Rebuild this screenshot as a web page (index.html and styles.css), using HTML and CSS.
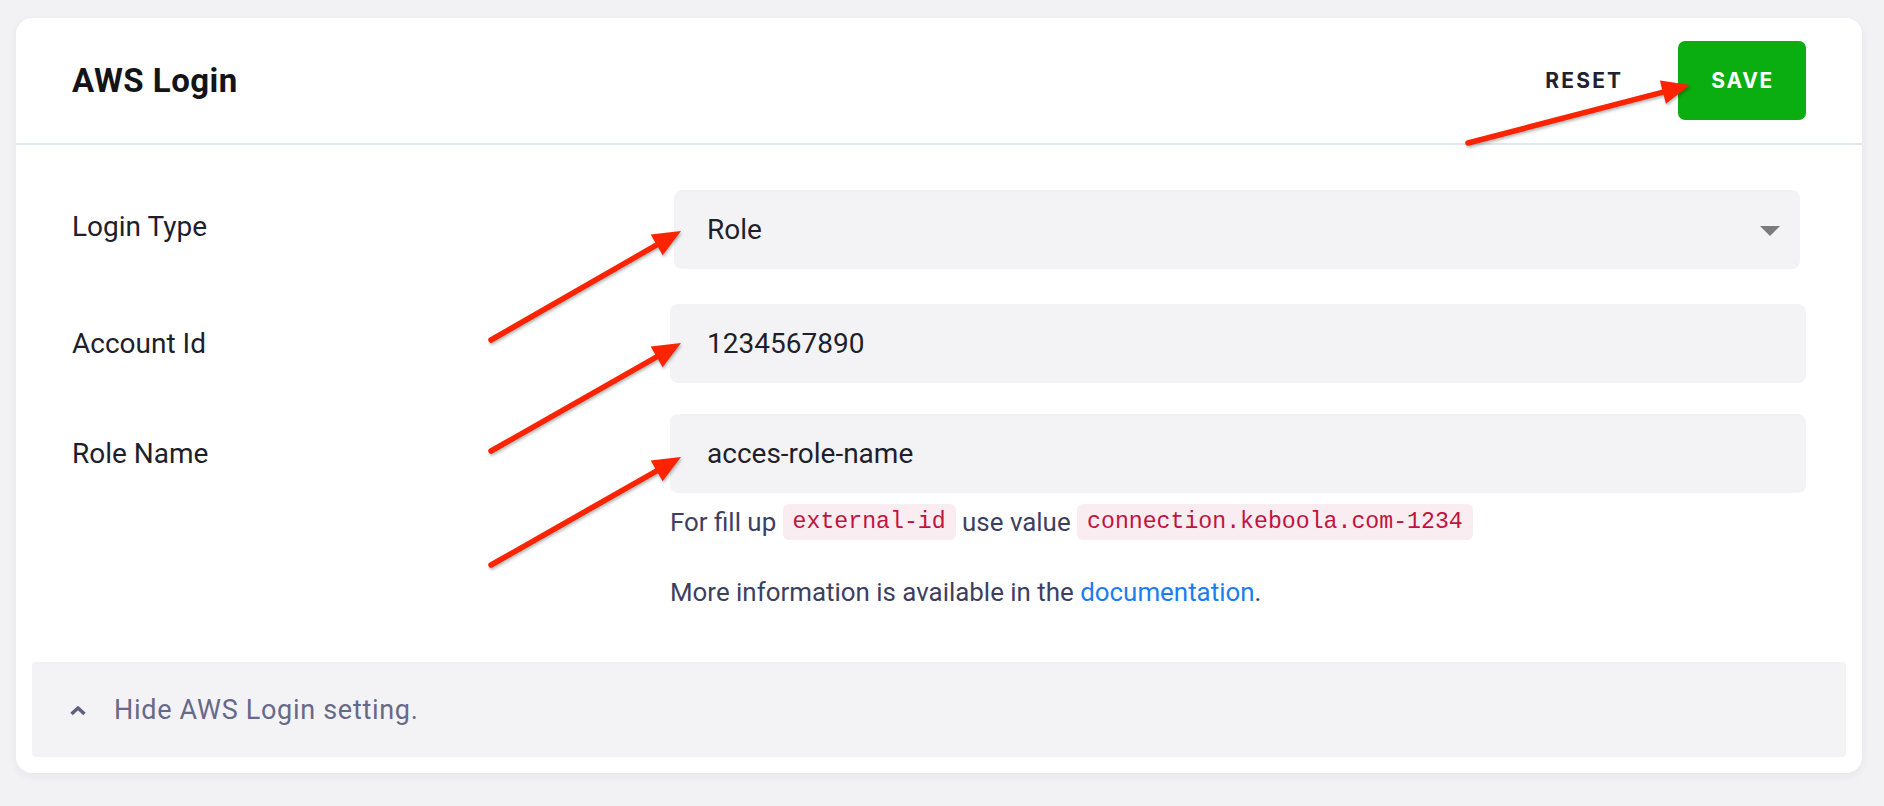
FILE: index.html
```html
<!DOCTYPE html>
<html lang="en">
<head>
<meta charset="utf-8">
<title>AWS Login</title>
<link rel="stylesheet" href="styles.css">
</head>
<body>
<div class="page">
  <section class="card">
    <header class="card-header">
      <h2 class="card-title">AWS Login</h2>
      <div class="actions">
        <button class="btn btn-reset" type="button">RESET</button>
        <button class="btn btn-save" type="button">SAVE</button>
      </div>
    </header>

    <div class="card-body">
      <div class="form-row">
        <label class="label">Login Type</label>
        <div class="control">
          <div class="select">
            <span class="select-value">Role</span>
            <span class="caret"></span>
          </div>
        </div>
      </div>

      <div class="form-row">
        <label class="label">Account Id</label>
        <div class="control">
          <div class="input">1234567890</div>
        </div>
      </div>

      <div class="form-row">
        <label class="label">Role Name</label>
        <div class="control">
          <div class="input">acces-role-name</div>
          <div class="help">
            <p class="help-line">For fill up <code class="code">external-id</code> use value <code class="code">connection.keboola.com-1234</code></p>
            <p class="help-line help-more">More information is available in the <a class="link" href="#">documentation</a>.</p>
          </div>
        </div>
      </div>
    </div>

    <div class="card-footer">
      <svg class="chevron" width="18" height="10" viewBox="0 0 18 10" aria-hidden="true">
        <polyline points="2.5,8 9,2 15.5,8" fill="none" stroke="#5f6180" stroke-width="3.6" stroke-linejoin="round"/>
      </svg>
      <span class="footer-text">Hide AWS Login setting.</span>
    </div>
  </section>

  <svg class="annotations" width="1884" height="806" viewBox="0 0 1884 806" aria-hidden="true">
    <g class="arrow">
      <line x1="1468" y1="143" x2="1664" y2="91.8"/>
      <polygon points="1690,85 1665.9,103.7 1659.9,80.5"/>
    </g>
    <g class="arrow">
      <line x1="491" y1="340" x2="658" y2="244.2"/>
      <polygon points="681,231 662.7,255.3 650.7,234.5"/>
    </g>
    <g class="arrow">
      <line x1="491" y1="451" x2="658" y2="356.1"/>
      <polygon points="681,343 662.6,367.3 650.7,346.4"/>
    </g>
    <g class="arrow">
      <line x1="491" y1="565" x2="658" y2="470.1"/>
      <polygon points="681,457 662.6,481.3 650.7,460.4"/>
    </g>
  </svg>
</div>
</body>
</html>
```

FILE: styles.css
```css
* { box-sizing: border-box; }

html, body {
  margin: 0;
  padding: 0;
  background: #f2f2f5;
  font-family: Roboto, "Liberation Sans", Arial, sans-serif;
  color: #1f1f2d;
}

.page {
  position: relative;
  width: 1884px;
  height: 806px;
  padding: 18px 22px 0 16px;
}

.card {
  display: flex;
  flex-direction: column;
  height: 755px;
  background: #ffffff;
  border-radius: 16px;
  box-shadow: 0 3px 8px rgba(40, 40, 80, 0.06);
}

.card-header {
  display: flex;
  align-items: center;
  justify-content: space-between;
  height: 127px;
  padding: 0 56px;
  border-bottom: 2px solid #e2e8f0;
}

.card-title {
  margin: 0;
  font-family: Roboto, "Liberation Sans", sans-serif;
  font-weight: 700;
  font-size: 33px;
  letter-spacing: 0.5px;
  color: #141418;
}

.actions {
  display: flex;
  align-items: center;
  gap: 55px;
}

.btn {
  border: 0;
  margin: 0;
  font-family: Inter, Roboto, sans-serif;
  font-weight: 700;
  font-size: 21px;
  letter-spacing: 2.2px;
  cursor: pointer;
}

.btn-reset {
  background: transparent;
  padding: 0;
  color: #22222f;
}

.btn-save {
  height: 79px;
  padding: 0 32px 0 33px;
  background: #0aae10;
  color: #ffffff;
  border-radius: 7px;
  letter-spacing: 1.7px;
}

.card-body {
  display: flex;
  flex-direction: column;
  gap: 31px;
  padding: 41px 56px 0;
}

.form-row {
  display: grid;
  grid-template-columns: 598px 1fr;
  align-items: start;
}

.label {
  display: flex;
  align-items: center;
  height: 79px;
  font-size: 28px;
  color: #1e1e2c;
}

.form-row:first-child .label {
  height: 80px;
}

.select {
  display: flex;
  align-items: center;
  justify-content: space-between;
  height: 79px;
  margin: 4px 6px 4px 4px;
  padding: 0 20px 0 33px;
  background: #f3f3f6;
  border-radius: 8px;
  font-size: 28px;
  color: #1f1f2b;
}

.caret {
  width: 0;
  height: 0;
  margin-top: 2px;
  border-left: 10px solid transparent;
  border-right: 10px solid transparent;
  border-top: 10px solid #7b7b7b;
}

.input {
  display: flex;
  align-items: center;
  height: 79px;
  padding: 0 37px;
  background: #f3f3f6;
  border-radius: 8px;
  font-size: 28px;
  color: #1f1f2b;
}

.help {
  padding-top: 11px;
  color: #3d3f62;
  font-size: 25.9px;
}

.help-line {
  margin: 0;
  line-height: 36px;
}

.help-more {
  margin-top: 34px;
}

.code {
  display: inline-block;
  height: 36px;
  padding: 0 10px;
  background: #f9edf1;
  border-radius: 6px;
  font-family: "Liberation Mono", "DejaVu Sans Mono", monospace;
  font-size: 23.2px;
  line-height: 36px;
  color: #c2133f;
  vertical-align: top;
}

.link {
  color: #1a7ef2;
  text-decoration: none;
}

.card-footer {
  display: flex;
  align-items: center;
  gap: 27px;
  height: 95px;
  margin: auto 16px 16px;
  padding-left: 37px;
  background: #f3f3f6;
  border-radius: 4px;
}

.chevron {
  display: block;
  margin-top: 3px;
}

.footer-text {
  font-size: 27px;
  letter-spacing: 0.7px;
  color: #676987;
}

.annotations {
  position: absolute;
  top: 0;
  left: 0;
  pointer-events: none;
  filter: drop-shadow(1px 2px 1.5px rgba(0, 0, 0, 0.28));
}

.arrow line {
  stroke: #fc2300;
  stroke-width: 5.5;
  stroke-linecap: round;
}

.arrow polygon {
  fill: #fc2300;
}
```
